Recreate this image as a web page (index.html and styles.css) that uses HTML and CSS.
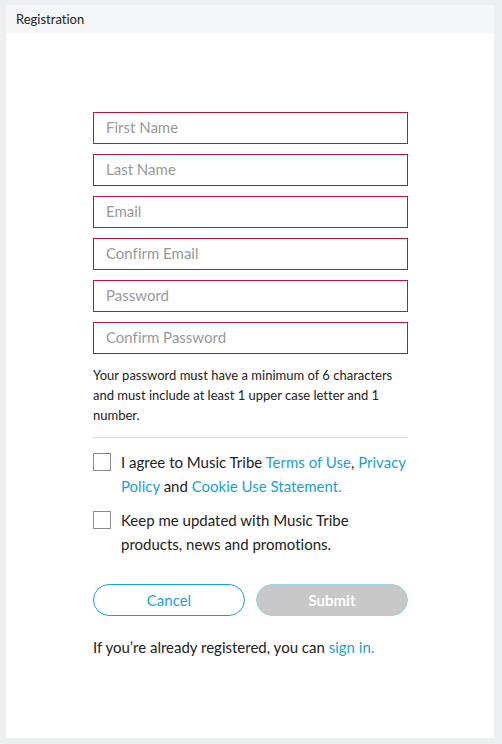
FILE: index.html
```html
<!DOCTYPE html>
<html>
<head>
<meta charset="utf-8">
<link rel="stylesheet" href="styles.css">
</head>
<body>
<div class="window">
  <div class="titlebar">Registration</div>
  <div class="panel">
    <form class="form">
      <div class="fields">
        <div class="field">First Name</div>
        <div class="field">Last Name</div>
        <div class="field">Email</div>
        <div class="field">Confirm Email</div>
        <div class="field">Password</div>
        <div class="field">Confirm Password</div>
      </div>
      <p class="hint">Your password must have a minimum of 6 characters and must include at least 1 upper case letter and 1 number.</p>
      <div class="divider"></div>
      <div class="check">
        <span class="box"></span>
        <span class="label">I agree to Music Tribe <a class="link">Terms of Use</a>, <a class="link">Privacy Policy</a> and <a class="link">Cookie Use Statement.</a></span>
      </div>
      <div class="check">
        <span class="box"></span>
        <span class="label">Keep me updated with Music Tribe products, news and promotions.</span>
      </div>
      <div class="buttons">
        <div class="btn cancel">Cancel</div>
        <div class="btn submit">Submit</div>
      </div>
      <p class="signin">If you’re already registered, you can <a class="link">sign in.</a></p>
    </form>
  </div>
</div>
</body>
</html>
```

FILE: styles.css
```css
html, body {
  margin: 0;
  padding: 0;
  background: #eeeff0;
  font-family: "Lato", "Open Sans", sans-serif;
  font-variant-ligatures: none;
  color: #222;
}
.window {
  width: 502px;
  height: 744px;
  padding: 5px 8px 6px 6px;
  box-sizing: border-box;
  display: flex;
  flex-direction: column;
}
.titlebar {
  height: 28px;
  background: #f5f6f7;
  font-size: 13px;
  line-height: 28px;
  padding-left: 10px;
  color: #222;
  flex: none;
}
.panel {
  flex: 1;
  background: #fff;
  padding-top: 79px;
}
.form {
  width: 315px;
  margin-left: 87px;
}
.fields {
  display: flex;
  flex-direction: column;
  gap: 10px;
}
.field {
  height: 32px;
  box-sizing: border-box;
  border: 1px solid #b8163c;
  padding-left: 12px;
  font-size: 15px;
  line-height: 28px;
  color: #999;
}
.hint {
  margin: 11px 0 0 0;
  font-size: 13px;
  line-height: 20px;
  color: #222;
}
.divider {
  height: 1px;
  background: #d9d9d9;
  margin-top: 12px;
}
.check {
  display: flex;
  gap: 10px;
  margin-top: 12px;
  font-size: 15px;
  line-height: 24px;
}
.check + .check { margin-top: 10px; }
.box {
  flex: none;
  width: 18px;
  height: 18px;
  box-sizing: border-box;
  border: 1px solid #8a8a8a;
  margin-top: 3px;
}
.label { color: #222; }
.link { color: #1b9fd6; text-decoration: none; }
.buttons {
  display: flex;
  gap: 11px;
  margin-top: 28px;
}
.btn {
  flex: 1;
  height: 32px;
  box-sizing: border-box;
  border-radius: 16px;
  text-align: center;
  font-size: 15px;
  line-height: 30px;
}
.cancel {
  border: 1px solid #1b9fd6;
  color: #1b9fd6;
}
.submit {
  background: #c8c8c8;
  border: 1px solid #9fd4e6;
  color: #fff;
  font-weight: bold;
}
.signin {
  margin: 19px 0 0 0;
  font-size: 15px;
  line-height: 24px;
  color: #222;
}
```
